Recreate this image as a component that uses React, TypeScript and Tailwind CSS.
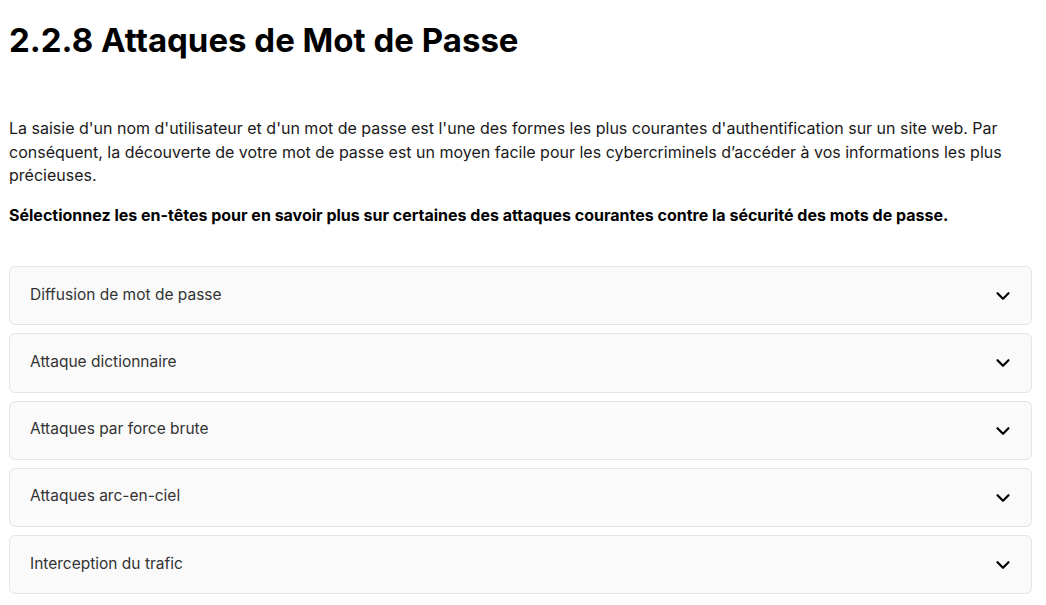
import { ChevronDown } from 'lucide-react';

const items = [
  'Diffusion de mot de passe',
  'Attaque dictionnaire',
  'Attaques par force brute',
  'Attaques arc-en-ciel',
  'Interception du trafic',
];

export default function App() {
  return (
    <div className="min-h-screen bg-white pl-[9px] pr-[14px] text-black" style={{ fontFamily: 'Inter, "Noto Sans", sans-serif' }}>
      <h1 className="pt-[20px] text-[33px] font-bold leading-[40px]">2.2.8 Attaques de Mot de Passe</h1>

      <p className="mt-[57px] text-[16px] leading-[23.5px] text-[#1a1a1a]">
        La saisie d'un nom d'utilisateur et d'un mot de passe est l'une des formes les plus courantes d'authentification sur un site web. Par conséquent, la découverte de votre mot de passe est un moyen facile pour les cybercriminels d’accéder à vos informations les plus précieuses.
      </p>
      <p className="mt-[16px] text-[16px] font-bold leading-[23.5px]">
        Sélectionnez les en-têtes pour en savoir plus sur certaines des attaques courantes contre la sécurité des mots de passe.
      </p>

      <div className="mt-[39px] flex flex-col gap-[8px]">
        {items.map((label) => (
          <button
            key={label}
            className="flex h-[59.25px] w-full items-center justify-between rounded-[6px] border border-[#e4e4e9] bg-[#fafafa] pl-[20px] pr-[17px] text-left"
          >
            <span className="-mt-[3px] text-[15.5px] text-[#333]">{label}</span>
            <ChevronDown className="mt-[1px] h-[22px] w-[22px] text-black" strokeWidth={2.4} />
          </button>
        ))}
      </div>
    </div>
  );
}
